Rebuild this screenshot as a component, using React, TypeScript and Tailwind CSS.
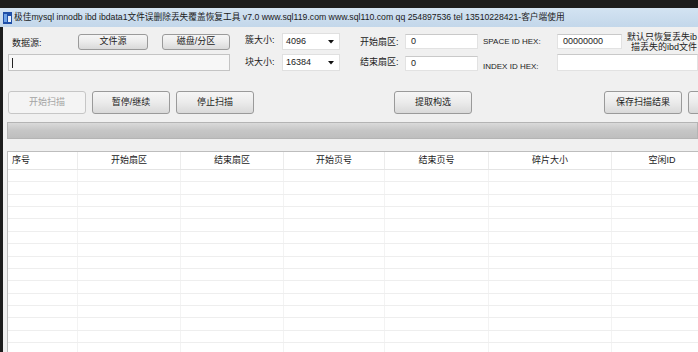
import React from 'react';

const font = { fontFamily: "'Liberation Sans', 'Noto Sans CJK SC', sans-serif" };

const Btn: React.FC<{ label: string; w: string; disabled?: boolean; className?: string }> = ({ label, w, disabled, className = '' }) => (
  <div
    className={`${w} ${className} shrink-0 flex items-center justify-center rounded-[3px] border text-[9px] ${
      disabled
        ? 'border-[#c6c6c6] bg-[#f4f4f4] text-[#a3a3a3]'
        : 'border-[#9a9a9a] bg-gradient-to-b from-[#f6f6f6] via-[#ebebeb] to-[#d9d9d9] text-[#222]'
    }`}
  >
    {label}
  </div>
);

const Field: React.FC<{ value?: string; w: string; h?: string; className?: string }> = ({ value = '', w, h = 'h-[15px]', className = '' }) => (
  <div className={`${w} ${h} ${className} shrink-0 flex items-center bg-white border border-[#e2e2e2] border-t-[#c9c9c9] pl-[5px] text-[9px] text-[#222]`}>
    {value}
  </div>
);

const Select: React.FC<{ value: string }> = ({ value }) => (
  <div className="w-[58px] h-[17px] shrink-0 flex items-center justify-between bg-white border border-[#e0e0e0] pl-[3px] pr-[5px] text-[9px] text-[#222]">
    <span>{value}</span>
    <svg width="6" height="4" viewBox="0 0 6 4">
      <path d="M0 0 L6 0 L3 3.5 Z" fill="#111" />
    </svg>
  </div>
);

const columns = [
  { label: '序号', w: 'w-[70px]', left: true },
  { label: '开始扇区', w: 'w-[103px]' },
  { label: '结束扇区', w: 'w-[103px]' },
  { label: '开始页号', w: 'w-[101px]' },
  { label: '结束页号', w: 'w-[104px]' },
  { label: '碎片大小', w: 'w-[123px]' },
  { label: '空闲ID', w: 'w-[100px]' },
];

export default function App() {
  return (
    <div style={font} className="w-[698px] h-[352px] overflow-hidden bg-[#1c1c1c] flex flex-col">
      <div className="h-[8px] shrink-0" />
      {/* title bar */}
      <div className="h-[19px] shrink-0 flex items-center bg-gradient-to-b from-[#d3e3f2] to-[#c3d7ea]">
        <svg width="9" height="12" viewBox="0 0 9 12" className="ml-[3px] shrink-0">
          <rect x="0" y="0" width="9" height="12" fill="#1f4fa8" />
          <rect x="1" y="2" width="3" height="8" fill="#6fa3e6" />
          <rect x="5" y="4" width="3" height="6" fill="#e8f0fa" />
        </svg>
        <span className="ml-[2px] text-[8.7px] text-[#1a1a1a] whitespace-nowrap">
          极佳mysql innodb ibd ibdata1文件误删除丢失覆盖恢复工具 v7.0 www.sql119.com www.sql110.com qq 254897536 tel 13510228421-客户端使用
        </span>
      </div>
      {/* body */}
      <div className="flex-1 ml-[3px] bg-[#f0f0f0] flex flex-col text-[9px] text-[#222] overflow-hidden">
        {/* row 1 */}
        <div className="mt-[6px] h-[17px] flex items-center whitespace-nowrap">
          <span className="ml-[9px] w-[66px] shrink-0 pt-[4px]">数据源:</span>
          <Btn label="文件源" w="w-[70px] h-[16px]" />
          <Btn label="磁盘/分区" w="w-[68px] h-[16px]" className="ml-[14px]" />
          <span className="ml-[15px] w-[37px] shrink-0 pb-[1px]">簇大小:</span>
          <Select value="4096" />
          <span className="ml-[20px] w-[45px] shrink-0 pt-[3px]">开始扇区:</span>
          <Field value="0" w="w-[73px]" />
          <span className="ml-[5px] w-[74px] shrink-0 text-[8px]">SPACE ID HEX:</span>
          <Field value="00000000" w="w-[65px]" />
          <div className="ml-[5px] shrink-0 flex flex-col leading-[10px] text-[9px]">
            <span>默认只恢复丢失ib</span>
            <span className="ml-[4px]">描丢失的ibd文件</span>
          </div>
        </div>
        {/* row 2 */}
        <div className="mt-[4px] h-[17px] flex items-center whitespace-nowrap">
          <div className="ml-[5px] w-[222px] h-[17px] shrink-0 flex items-center bg-[#f7f7f7] border border-[#c4c4c4] pl-[3px]">
            <div className="w-px h-[10px] bg-[#222]" />
          </div>
          <span className="ml-[15px] w-[37px] shrink-0">块大小:</span>
          <Select value="16384" />
          <span className="ml-[20px] w-[45px] shrink-0">结束扇区:</span>
          <Field value="0" w="w-[73px]" className="mt-[2px]" />
          <span className="ml-[5px] w-[74px] shrink-0 text-[8px] pt-[8px]">INDEX ID HEX:</span>
          <Field w="w-[141px]" h="h-[17px]" />
        </div>
        {/* buttons */}
        <div className="mt-[20px] h-[23px] flex whitespace-nowrap">
          <Btn label="开始扫描" w="w-[78px]" disabled className="ml-[5px]" />
          <Btn label="暂停/继续" w="w-[78px]" className="ml-[6px]" />
          <Btn label="停止扫描" w="w-[78px]" className="ml-[6px]" />
          <Btn label="提取构选" w="w-[78px]" className="ml-[140px]" />
          <Btn label="保存扫描结果" w="w-[78px]" className="ml-[132px]" />
          <Btn label="" w="w-[78px]" className="ml-[6px]" />
        </div>
        {/* progress */}
        <div className="mt-[8px] ml-[4px] h-[17px] shrink-0 border border-[#b4b4b4] bg-gradient-to-b from-[#dadada] via-[#c6c6c6] to-[#bebebe]" />
        {/* table */}
        <div className="mt-[12px] ml-[4px] flex-1 bg-white border-l border-t border-[#bdbdbd] overflow-hidden">
          <div className="h-[18px] flex border-b border-[#e4e4e4] whitespace-nowrap">
            {columns.map((c, i) => (
              <div
                key={c.label}
                className={`${c.w} shrink-0 h-full flex items-center text-[9px] text-[#222] ${
                  i < columns.length - 1 ? 'border-r border-[#ececec]' : ''
                } ${c.left ? 'pl-[4px]' : 'justify-center'}`}
              >
                {c.label}
              </div>
            ))}
          </div>
          {Array.from({ length: 15 }).map((_, r) => (
            <div key={r} className="h-[12.36px] flex border-b border-[#eeeeee]">
              {columns.map((c, i) => (
                <div
                  key={c.label}
                  className={`${c.w} shrink-0 h-full ${i < columns.length - 1 ? 'border-r border-[#f3f3f3]' : ''}`}
                />
              ))}
            </div>
          ))}
        </div>
      </div>
    </div>
  );
}
